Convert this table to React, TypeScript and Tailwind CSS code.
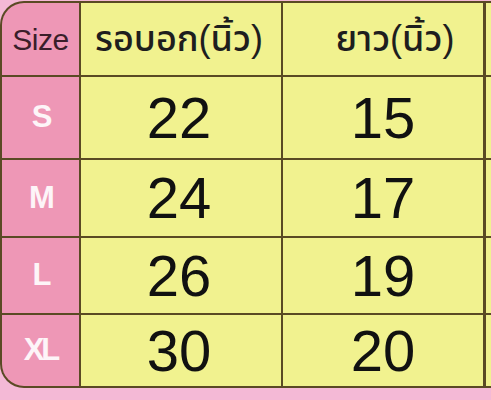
const rows = [
  { size: "S", chest: "22", length: "15", h: "h-[81px]" },
  { size: "M", chest: "24", length: "17", h: "h-[76px]" },
  { size: "L", chest: "26", length: "19", h: "h-[75px]" },
  { size: "XL", chest: "30", length: "20", h: "h-[71px]" },
];

const font = { fontFamily: '"Liberation Sans", "Noto Sans Thai", "Noto Sans", Arial, sans-serif' };

export default function App() {
  return (
    <div className="w-[491px] h-[400px] overflow-hidden bg-[#f4b9d6] pt-[1px]" style={font}>
      <div className="w-[540px] bg-[#5a4a24] p-[2px] pr-0 rounded-l-[24px]">
        <div className="grid grid-cols-[77px_200px_200px_60px] gap-x-[2px] gap-y-[2px]">
          <div className="h-[72px] bg-[#ee97b6] rounded-tl-[22px] flex items-center justify-center text-[30px] text-[#3a1e2a] tracking-[-0.5px]">
            Size
          </div>
          <div className="h-[72px] bg-[#f1f28f] flex items-center justify-center pr-1 text-[36px] font-medium text-[#1e1e1e]">
            รอบอก(นิ้ว)
          </div>
          <div className="h-[72px] bg-[#f1f28f] flex items-center justify-center pl-6 text-[36px] font-medium text-[#1e1e1e]">
            ยาว(นิ้ว)
          </div>
          <div className="h-[72px] bg-[#f1f28f] ml-[1px]" />
          {rows.map((r, i) => (
            <div key={r.size} className="contents">
              <div
                className={`${r.h} bg-[#ee97b6] flex items-center justify-center text-[31px] font-bold text-white/90 tracking-[-3px] ${
                  i === rows.length - 1 ? "rounded-bl-[22px]" : ""
                }`}
              >
                {r.size}
              </div>
              <div className={`${r.h} bg-[#f1f28f] flex items-center justify-center pr-1 text-[58px] leading-none text-[#111]`}>
                {r.chest}
              </div>
              <div className={`${r.h} bg-[#f1f28f] flex items-center justify-center text-[58px] leading-none text-[#111]`}>
                {r.length}
              </div>
              <div className={`${r.h} bg-[#f1f28f] ml-[1px]`} />
            </div>
          ))}
        </div>
      </div>
    </div>
  );
}
